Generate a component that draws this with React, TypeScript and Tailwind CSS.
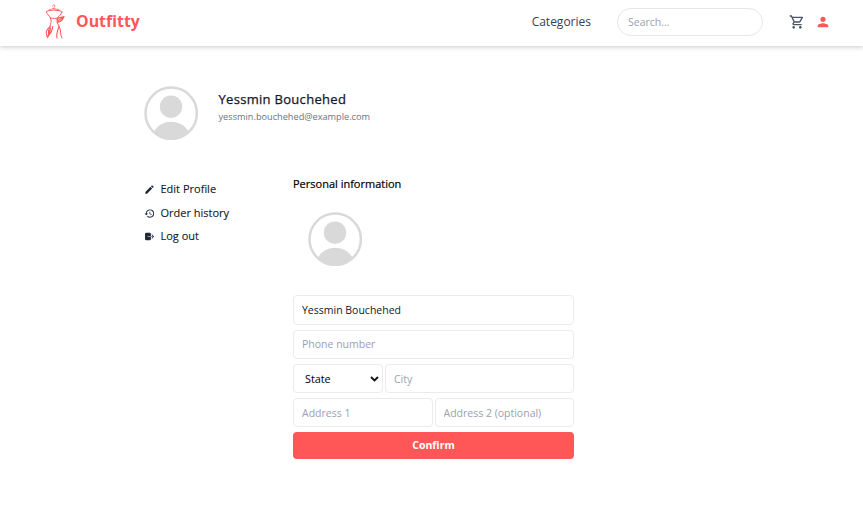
import React from "react";
import { MdEdit, MdHistory, MdOutlineShoppingCart, MdPerson } from "react-icons/md";
import { IoLogOut } from "react-icons/io5";

function DressLogo() {
  return (
    <svg width="20" height="36" viewBox="0 0 20 36" fill="none" stroke="#ff5757" strokeWidth="1" strokeLinecap="round" strokeLinejoin="round">
      <path d="M7.500 2C7.500 .5 10 .5 9.800 2C9.800 3 8.800 3 8.800 5M8.800 4.500L4 5.800M8.800 4.500L14 5.800" strokeOpacity=".75" />
      <path d="M1.300 8C4 5.500 6 7 8.800 6C12 7 14 5.500 17 8M1.300 8C2 10.500 4.500 11.500 5.500 14M17 8C16 11 13.500 12 12.500 14M5.500 14C8 14.600 11 14.600 12.500 14" />
      <path d="M5.500 14C7 17.500 5.500 20 5 22.500C4 27 5 31 2.500 34M12.500 14C11.500 17 12 19 14 22C16.500 26 14.500 30 17 34" />
      <path d="M12 15.500C14 12.500 16 14 19 12.500C17.500 15.500 16.500 18 12.400 18M13 16.500L17.500 14" strokeWidth="1.300" />
      <path d="M5 22.500C4 24.500 1.500 25 1.500 27.500C.8 29 1.500 31 2 32.500C3.500 31 6 29.500 6.800 26.500L7.800 22.500M3.500 26V30M5.500 24L4.500 29M14 22.500C12.500 27 11 30 12 34" strokeWidth="1.100" />
    </svg>
  );
}

function Avatar() {
  return (
    <svg className="block size-[54px] shrink-0" viewBox="0 0 54 54" fill="#d9d9d9">
      <circle cx="27.200" cy="27.200" r="25.700" fill="none" stroke="#d9d9d9" strokeWidth="2.500" />
      <circle cx="27" cy="20.700" r="11.200" />
      <path d="M10 45.500C14 39 20 35.700 27.200 35.700S40.500 39 44.500 45.500C40 51 34 54 27 54S14 51 10 45.500Z" />
    </svg>
  );
}

const menu = [
  { label: "Edit Profile", Icon: MdEdit },
  { label: "Order history", Icon: MdHistory },
  { label: "Log out", Icon: IoLogOut },
];

const field =
  "block w-full min-w-0 rounded border border-[#ebebeb] bg-white px-2 text-[10.5px] text-gray-900 outline-none placeholder:text-gray-400";

export default function App() {
  return (
    <div className="h-[513px] overflow-hidden bg-white font-['Open_Sans',sans-serif] text-[11px] text-gray-900">
      <header className="flex h-[46px] items-center pb-[2px] pl-[45px] pr-[32px] shadow-[0_1px_5px_rgba(0,0,0,0.22)]">
        <DressLogo />
        <span className="ml-[11px] pb-px text-[15.900px] font-bold text-[#ff5757]">Outfitty</span>
        <nav className="ml-auto flex items-center text-gray-700">
          <a className="text-[12px]">Categories</a>
          <input className="ml-[26px] h-7 w-[146px] rounded-full border border-gray-200 px-[10px] pb-px text-[10.5px] outline-none placeholder:text-gray-400" placeholder="Search..." />
          <MdOutlineShoppingCart className="ml-[26px] text-gray-600" size={16} />
          <MdPerson className="ml-[10px] text-[#ff5757]" size={16} />
        </nav>
      </header>
      <main className="ml-[144px] pt-10">
        <section className="flex">
          <Avatar />
          <div className="ml-[20.500px] pt-[3px]">
            <h1 className="text-[13px] leading-5 tracking-[0.3px] [-webkit-text-stroke:0.25px_currentColor]">Yessmin Bouchehed</h1>
            <p className="pt-px text-[9.200px] leading-[14px] text-gray-500">yessmin.bouchehed@example.com</p>
          </div>
        </section>
        <div className="mt-9 flex">
          <ul className="flex w-[149px] flex-col pt-px">
            {menu.map(({ label, Icon }) => (
              <li key={label} className="flex h-6 items-center gap-[5.500px] [-webkit-text-stroke:0.1px_currentColor] last:h-[23px]">
                <Icon size={11} className="text-gray-800" />
                <span>{label}</span>
              </li>
            ))}
          </ul>
          <section className="w-[281px]">
            <h2 className="leading-4 text-black [-webkit-text-stroke:0.2px_currentColor]">Personal information</h2>
            <div className="ml-[15px] mt-5"><Avatar /></div>
            <form className="mt-[29px] flex flex-col gap-[5px]">
              <input className={`${field} h-[30px] pb-px`} defaultValue="Yessmin Bouchehed" />
              <input className={`${field} h-[29px] pb-px`} placeholder="Phone number" />
              <div className="flex gap-[2px]">
                <div className="relative w-[90px] shrink-0">
                  <select className="block h-[29px] w-full appearance-none rounded border border-[#ebebeb] bg-white pl-[11px] pt-[2px] text-[10.800px] text-black">
                    <option>State</option>
                  </select>
                  <svg className="pointer-events-none absolute right-[4px] top-[12px]" width="9" height="6" viewBox="0 0 9 6" fill="none" stroke="#111" strokeWidth="1.800">
                    <path d="M1 1L4.500 4.500L8 1" />
                  </svg>
                </div>
                <input className={`${field} h-[29px] pt-px`} placeholder="City" />
              </div>
              <div className="flex gap-[2px]">
                <input className={`${field} h-[29px] pt-px`} placeholder="Address 1" />
                <input className={`${field} h-[29px] pt-px`} placeholder="Address 2 (optional)" />
              </div>
              <button type="button" className="h-[27px] rounded bg-[#ff5757] text-[10.500px] font-bold text-white">Confirm</button>
            </form>
          </section>
        </div>
      </main>
    </div>
  );
}
